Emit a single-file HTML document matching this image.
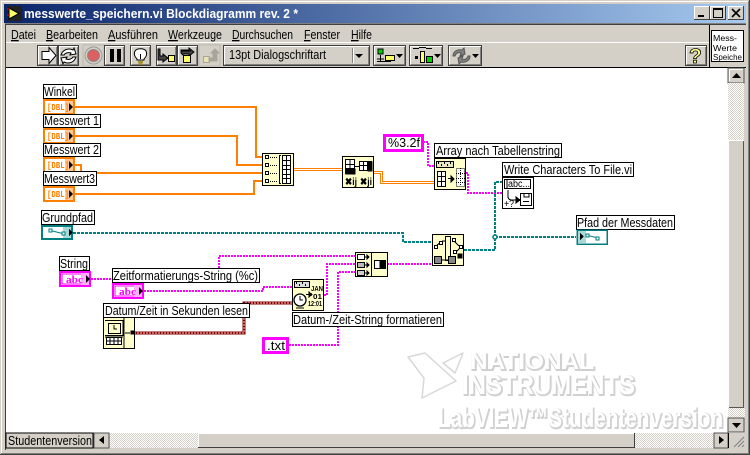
<!DOCTYPE html>
<html><head><meta charset="utf-8"><style>
html,body{margin:0;padding:0;background:#d4d0c8}
svg{display:block;position:absolute;left:0;top:0}
text{font-family:"Liberation Sans",sans-serif;font-size:13px;fill:#000}
.c{shape-rendering:crispEdges}
.l{fill:#fff;stroke:#000;stroke-width:1;shape-rendering:crispEdges}
.n{fill:#ffffcc;stroke:#000;stroke-width:1;shape-rendering:crispEdges}
.w{fill:none;shape-rendering:crispEdges}
.o{stroke:#ff8000;stroke-width:2}
.p{stroke:#ff00ff;stroke-width:2;stroke-dasharray:2 1}
.t{stroke:#008080;stroke-width:2;stroke-dasharray:3 1}
.dbl{font-size:9px;font-weight:bold;fill:#ff8000;font-family:"Liberation Mono",monospace}
.abc{font-size:10px;font-weight:bold;fill:#ff00ff;font-family:"Liberation Serif",serif}
.b{fill:#d4d0c8;stroke:#404040;shape-rendering:crispEdges}
.hl{fill:none;stroke:#fff;shape-rendering:crispEdges}
.sh{fill:none;stroke:#808080;shape-rendering:crispEdges}
.ws{fill:#d0d0d0;stroke:#d0d0d0;stroke-width:2;font-weight:bold}
.wm{fill:#fff;font-weight:bold}
.ic{fill:none;stroke:#000;stroke-width:1;shape-rendering:crispEdges}
</style></head><body>
<svg width="750" height="455" viewBox="0 0 750 455" xmlns="http://www.w3.org/2000/svg">
<defs>
<linearGradient id="tb" x1="0" x2="1" y1="0" y2="0"><stop offset="0" stop-color="#0a246a"/><stop offset="1" stop-color="#a6caf0"/></linearGradient>
<pattern id="chk" width="2" height="2" patternUnits="userSpaceOnUse"><rect width="2" height="2" fill="#fff"/><rect width="1" height="1" fill="#d4d0c8"/><rect x="1" y="1" width="1" height="1" fill="#d4d0c8"/></pattern>
</defs>

<!-- window frame -->
<rect width="750" height="455" fill="#d4d0c8"/>
<path class="c" d="M1 1.500H748M1.500 1V453" stroke="#fff"/>
<path class="c" d="M0 454.500H750M749.500 0V455" stroke="#404040"/>
<path class="c" d="M1 453.500H749M748.500 1V454" stroke="#808080"/>
<rect x="4" y="4" width="742" height="19" fill="url(#tb)"/>
<rect x="7" y="6" width="15" height="15" fill="#222"/>
<path d="M9 8l10 5.500-10 5.500z" fill="#ffff66" stroke="#000"/>
<path class="c" d="M7 9h3M7 15h3" stroke="#f00"/>
<text x="24" y="18" textLength="274" lengthAdjust="spacingAndGlyphs" style="font-weight:bold;font-size:13px;fill:#fff">messwerte_speichern.vi Blockdiagramm rev. 2 *</text>
<!-- title buttons -->
<g class="c">
<rect x="694" y="6" width="16" height="14" fill="#d4d0c8"/><path d="M694 6.500H710M694.500 6V20" stroke="#fff"/><path d="M694 19.500H710M709.500 6V20" stroke="#404040"/><rect x="698" y="15" width="6" height="2"/>
<rect x="710" y="6" width="16" height="14" fill="#d4d0c8"/><path d="M710 6.500H726M710.500 6V20" stroke="#fff"/><path d="M710 19.500H726M725.500 6V20" stroke="#404040"/><path d="M713.500 8.500h9v9h-9zM713 9.500h10" fill="none" stroke="#000"/>
<rect x="728" y="6" width="16" height="14" fill="#d4d0c8"/><path d="M728 6.500H744M728.500 6V20" stroke="#fff"/><path d="M728 19.500H744M743.500 6V20" stroke="#404040"/>
</g>
<path d="M732 9l8 8M740 9l-8 8" stroke="#000" stroke-width="1.600"/>
<!-- menu -->
<path class="c" d="M5 23.500H746" stroke="#808080"/><path class="c" d="M5 24.500H746" stroke="#404040"/>
<path class="c" d="M5 42.500H709" stroke="#fff"/><path class="c" d="M5 67.500H746" stroke="#000"/>
<path class="c" d="M709.500 25V67" stroke="#000"/>
<path class="c" d="M5.500 24V450" stroke="#404040"/>
<text x="11" y="39" textLength="25" lengthAdjust="spacingAndGlyphs"><tspan text-decoration="underline">D</tspan>atei</text>
<text x="46" y="39" textLength="52" lengthAdjust="spacingAndGlyphs"><tspan text-decoration="underline">B</tspan>earbeiten</text>
<text x="108" y="39" textLength="50" lengthAdjust="spacingAndGlyphs"><tspan text-decoration="underline">A</tspan>usführen</text>
<text x="168" y="39" textLength="54" lengthAdjust="spacingAndGlyphs"><tspan text-decoration="underline">W</tspan>erkzeuge</text>
<text x="232" y="39" textLength="61" lengthAdjust="spacingAndGlyphs"><tspan text-decoration="underline">D</tspan>urchsuchen</text>
<text x="304" y="39" textLength="36" lengthAdjust="spacingAndGlyphs"><tspan text-decoration="underline">F</tspan>enster</text>
<text x="351" y="39" textLength="21" lengthAdjust="spacingAndGlyphs"><tspan text-decoration="underline">H</tspan>ilfe</text>

<!-- toolbar buttons -->
<g>
<rect class="b" x="37.500" y="45.500" width="20" height="20"/><path class="hl" d="M38.500 64V46.500H57"/><path class="sh" d="M39 64.500H56.500V47"/>
<rect class="b" x="58.500" y="45.500" width="20" height="20"/><path class="hl" d="M59.500 64V46.500H78"/><path class="sh" d="M60 64.500H77.500V47"/>
<rect x="83" y="45" width="21" height="21" fill="#d4d0c8" stroke="#bbb8b0"/>
<rect class="b" x="104.500" y="45.500" width="20" height="20"/><path class="hl" d="M105.500 64V46.500H124"/><path class="sh" d="M106 64.500H123.500V47"/>
<rect class="b" x="130.500" y="45.500" width="20" height="20"/><path class="hl" d="M131.500 64V46.500H150"/><path class="sh" d="M132 64.500H149.500V47"/>
<rect class="b" x="156.500" y="45.500" width="20" height="20"/><path class="hl" d="M157.500 64V46.500H176"/><path class="sh" d="M158 64.500H175.500V47"/>
<rect class="b" x="177.500" y="45.500" width="20" height="20"/><path class="hl" d="M178.500 64V46.500H197"/><path class="sh" d="M179 64.500H196.500V47"/>
<rect x="199" y="45" width="21" height="21" fill="#d4d0c8" stroke="#bbb8b0"/>
<rect class="b" x="223.500" y="45.500" width="146" height="20"/><path class="hl" d="M224.500 64V46.500H369"/><path class="sh" d="M225 64.500H368.500V47"/>
<rect class="b" x="373.500" y="45.500" width="32" height="20"/><path class="hl" d="M374.500 64V46.500H405"/><path class="sh" d="M375 64.500H404.500V47"/>
<rect class="b" x="409.500" y="45.500" width="33" height="20"/><path class="hl" d="M410.500 64V46.500H442"/><path class="sh" d="M411 64.500H441.500V47"/>
<rect class="b" x="448.500" y="45.500" width="33" height="20"/><path class="hl" d="M449.500 64V46.500H481"/><path class="sh" d="M450 64.500H480.500V47"/>
<rect class="b" x="685.500" y="45.500" width="21" height="20"/><path class="hl" d="M686.500 64V46.500H706"/><path class="sh" d="M687 64.500H705.500V47"/>
</g>
<!-- run -->
<path d="M42 51.500h7v-4l7 8-7 8v-4h-7z" fill="#fff" stroke="#000"/>
<!-- run cont -->
<path d="M61 55c2-6 8-7 12-5l1-2 2 6-6 1 1-2c-3-1-6 0-7 2zM76 57c-2 6-8 7-12 5l-1 2-2-6 6-1-1 2c3 1 6 0 7-2z" fill="#fff" stroke="#000"/>
<!-- abort -->
<circle cx="93.500" cy="55.500" r="8.500" fill="none" stroke="#999"/><circle cx="93.500" cy="55.500" r="6" fill="#dd6060" stroke="#888"/>
<!-- pause -->
<rect class="c" x="110" y="49" width="4" height="13"/><rect class="c" x="117" y="49" width="4" height="13"/>
<!-- bulb -->
<path d="M137 59c-3-3-3-6-2-8 2-3 9-3 11 0 1 2 1 5-2 8v1h-7z" fill="#fff" stroke="#000"/>
<path d="M138 62h5M138.500 64h4" stroke="#a08000" stroke-width="1.500"/><path class="c" d="M140.500 54v5" stroke="#000"/>
<!-- step into -->
<path d="M160 49v7h3v-2l5 4-5 4v-2h-5v-11z" fill="#444" stroke="#000"/><rect class="c" x="168.500" y="55.500" width="6" height="6" fill="#ffff66" stroke="#000"/>
<!-- step over -->
<path d="M181 53v-3h8v-2l5 4-5 4v-2h-6v1z" fill="#444" stroke="#000"/><rect class="c" x="183.500" y="55.500" width="7" height="7" fill="#ffff66" stroke="#000"/><path class="c" d="M181 51h10" stroke="#000"/>
<!-- step out -->
<rect class="c" x="203.500" y="56.500" width="6" height="6" fill="#e8e4b8" stroke="#a8a49c"/><path d="M209 58h4v-5h-2l4-4 4 4h-2v8h-8z" fill="#a8a49c" stroke="#a8a49c"/>
<!-- font ring -->
<text x="229" y="59" textLength="97" lengthAdjust="spacingAndGlyphs">13pt Dialogschriftart</text>
<path class="c" d="M352.500 48v15" stroke="#808080"/><path class="c" d="M353.500 48v15" stroke="#fff"/><path d="M355 54h8l-4 4z" fill="#000"/>
<!-- align -->
<rect class="c" x="378" y="49" width="5" height="5" fill="#00d000" stroke="#000"/><path class="c" d="M380.500 55v7M377 59h7M377 61.500h14" stroke="#000"/><rect class="c" x="385.500" y="55.500" width="9" height="5" fill="#ffff66" stroke="#000"/>
<path d="M396 54h7l-3.500 4z" fill="#000"/>
<!-- distribute -->
<path class="c" d="M413 48.500h6M426 48.500h6M419 47.500h7" stroke="#000"/><rect class="c" x="420.500" y="51.500" width="4" height="11" fill="#ffff66" stroke="#000"/><rect class="c" x="426.500" y="56.500" width="6" height="6" fill="#00d000" stroke="#000"/><rect class="c" x="415" y="56" width="3" height="3"/>
<path d="M434 54h7l-3.500 4z" fill="#000"/>
<!-- reorder -->
<path d="M453 56c0-5 5-7 9-6l2-2 1 6-5 2 1-3c-3-1-5 0-6 3zM470 56c0 5-5 7-9 6l-2 2-1-6 5-2-1 3c3 1 5 0 6-3z" fill="#808080" stroke="#555"/>
<path d="M472 54h7l-3.500 4z" fill="#000"/>
<!-- help -->
<text x="689" y="63" style="font-size:21px;font-weight:bold;fill:#ffff88;stroke:#000;stroke-width:.8">?</text>
<!-- VI icon -->
<rect x="711.500" y="30.500" width="32" height="31" fill="#fff" stroke="#000" class="c"/>
<text x="713" y="41" style="font-size:8px" textLength="24" lengthAdjust="spacingAndGlyphs">Mess-</text>
<text x="713" y="51" style="font-size:8px" textLength="24" lengthAdjust="spacingAndGlyphs">Werte</text>
<text x="713" y="60" style="font-size:8px" textLength="29" lengthAdjust="spacingAndGlyphs" text-decoration="underline">Speiche</text>

<!-- canvas -->
<rect x="6" y="68" width="738" height="365" fill="#fff"/>

<!-- watermark -->
<g>
<path d="M408 357L425 353 L456 381 L438 390 L422 398 L424 378ZM443 363L463 353 L455 373Z" fill="#fff" stroke="#d8d8d8" stroke-width="1.500" stroke-linejoin="round"/>
<text class="ws" x="471" y="370" textLength="124" lengthAdjust="spacingAndGlyphs" style="font-size:22px">NATIONAL</text>
<text class="wm" x="470" y="369" textLength="124" lengthAdjust="spacingAndGlyphs" style="font-size:22px">NATIONAL</text>
<text class="ws" x="463" y="395" textLength="173" lengthAdjust="spacingAndGlyphs" style="font-size:27px">INSTRUMENTS</text>
<text class="wm" x="462" y="394" textLength="173" lengthAdjust="spacingAndGlyphs" style="font-size:27px">INSTRUMENTS</text>
<text class="ws" x="439" y="428" textLength="285" lengthAdjust="spacingAndGlyphs" style="font-size:27px">LabVIEW™Studentenversion</text>
<text class="wm" x="438" y="427" textLength="285" lengthAdjust="spacingAndGlyphs" style="font-size:27px">LabVIEW™Studentenversion</text>
</g>

<!-- scrollbars -->
<rect x="728" y="68" width="16" height="15" fill="#d4d0c8" stroke="#555" class="c"/><path class="hl" d="M729.500 81V69.500H743"/><path d="M732 78h9l-4.500-5z" fill="#000"/>
<rect x="728" y="83" width="16" height="57" fill="url(#chk)"/>
<rect x="728" y="140" width="17" height="268" fill="#d4d0c8"/><path class="hl" d="M728.500 408V140.500H744"/><path class="c" d="M743.500 141V408M729 407.500H744" stroke="#555"/>
<rect x="728" y="408" width="17" height="10" fill="url(#chk)"/>
<rect x="728" y="418" width="16" height="14" fill="#d4d0c8" stroke="#555" class="c"/><path d="M732 423h9l-4.500 5z" fill="#000"/>
<rect x="6" y="433" width="87" height="15" fill="#d4d0c8" stroke="#000" class="c"/>
<text x="8" y="445" textLength="84" lengthAdjust="spacingAndGlyphs">Studentenversion</text>
<rect x="94" y="433" width="15" height="15" fill="#d4d0c8" stroke="#555" class="c"/><path d="M104 436v8l-5-4z" fill="#000"/>
<rect x="110" y="433" width="88" height="15" fill="url(#chk)"/>
<rect x="198" y="433" width="437" height="15" fill="#d4d0c8"/><path class="hl" d="M198.500 447V433.500H635"/><path class="c" d="M198 447.500H635M634.500 433V448" stroke="#404040"/>
<rect x="635" y="433" width="79" height="15" fill="url(#chk)"/>
<rect x="714" y="433" width="14" height="15" fill="#d4d0c8" stroke="#555" class="c"/><path d="M719 436v8l5-4z" fill="#000"/>
<path class="c" d="M728.500 433V448" stroke="#000"/>
<path d="M734 447l10-10M738 447l6-6M742 447l2-2" stroke="#808080"/>

<!-- WIRES -->
<path class="w o" d="M75 107H256V157H262"/>
<path class="w o" d="M75 136H237V165H262"/>
<path class="w o" d="M75 165H81V173H262"/>
<path class="w o" d="M75 194H254V181H262"/>
<path class="w" stroke="#ff8000" d="M293 168.500H342M293 170.500H342"/>
<path class="w" stroke="#ff8000" d="M374 171.500H382.500V181.500H434M374 173.500H380.500V183.500H434"/>
<path class="w p" d="M423 142H428V166H434"/>
<path class="w p" d="M466 173H468V193H502"/>
<path class="w t" d="M464 250H495V182H502"/>
<path class="w t" d="M495 237H576"/>
<circle cx="495" cy="237" r="2" fill="#fff" stroke="#008080" stroke-width="1.500"/>
<path class="w t" d="M73 233H403V242H432"/>
<path class="w p" d="M91 279H113"/>
<path class="w p" d="M219 268V256H355"/>
<path class="w p" d="M144 291H263V287H292"/>
<path class="w p" d="M324 295H327V264H355"/>
<path class="w p" d="M289 345H338V272H355"/>
<path class="w p" d="M387 264H432"/>
<path class="w" stroke="#800000" stroke-width="3" d="M134 333H244V303H292"/><path class="w" stroke="#ffd0d0" stroke-dasharray="2 1" d="M134 333H244V303H292"/>

<!-- DBL terminals -->
<g transform="translate(43,99)"><rect x="1" y="1" width="30" height="14" fill="#fff" stroke="#ff8000" stroke-width="2"/><rect x="22" y="2" width="8" height="12" fill="#ffc896"/><text class="dbl" x="4" y="11" textLength="22" lengthAdjust="spacingAndGlyphs">[DBL]</text><path d="M26 4v8l4-4z"/></g>
<g transform="translate(43,128)"><rect x="1" y="1" width="30" height="14" fill="#fff" stroke="#ff8000" stroke-width="2"/><rect x="22" y="2" width="8" height="12" fill="#ffc896"/><text class="dbl" x="4" y="11" textLength="22" lengthAdjust="spacingAndGlyphs">[DBL]</text><path d="M26 4v8l4-4z"/></g>
<g transform="translate(43,157)"><rect x="1" y="1" width="30" height="14" fill="#fff" stroke="#ff8000" stroke-width="2"/><rect x="22" y="2" width="8" height="12" fill="#ffc896"/><text class="dbl" x="4" y="11" textLength="22" lengthAdjust="spacingAndGlyphs">[DBL]</text><path d="M26 4v8l4-4z"/></g>
<g transform="translate(43,186)"><rect x="1" y="1" width="30" height="14" fill="#fff" stroke="#ff8000" stroke-width="2"/><rect x="22" y="2" width="8" height="12" fill="#ffc896"/><text class="dbl" x="4" y="11" textLength="22" lengthAdjust="spacingAndGlyphs">[DBL]</text><path d="M26 4v8l4-4z"/></g>

<!-- labels -->
<rect class="l" x="43.500" y="84.500" width="33" height="14"/><text x="44" y="96" textLength="31" lengthAdjust="spacingAndGlyphs">Winkel</text>
<rect class="l" x="43.500" y="114.500" width="57" height="13"/><text x="44" y="125" textLength="55" lengthAdjust="spacingAndGlyphs">Messwert 1</text>
<rect class="l" x="43.500" y="143.500" width="57" height="13"/><text x="44" y="154" textLength="55" lengthAdjust="spacingAndGlyphs">Messwert 2</text>
<rect class="l" x="43.500" y="171.500" width="53" height="14"/><text x="44" y="183" textLength="51" lengthAdjust="spacingAndGlyphs">Messwert3</text>
<rect class="l" x="41.500" y="210.500" width="53" height="14"/><text x="42" y="222" textLength="51" lengthAdjust="spacingAndGlyphs">Grundpfad</text>
<rect class="l" x="59.500" y="256.500" width="30" height="14"/><text x="60" y="268" textLength="28" lengthAdjust="spacingAndGlyphs">String</text>
<rect class="l" x="112.500" y="268.500" width="147" height="14"/><text x="113" y="280" textLength="145" lengthAdjust="spacingAndGlyphs">Zeitformatierungs-String (%c)</text>
<rect class="l" x="103.500" y="303.500" width="146" height="14"/><text x="105" y="315" textLength="143" lengthAdjust="spacingAndGlyphs">Datum/Zeit in Sekunden lesen</text>
<rect class="l" x="292.500" y="312.500" width="151" height="14"/><text x="293" y="324" textLength="149" lengthAdjust="spacingAndGlyphs">Datum-/Zeit-String formatieren</text>
<rect class="l" x="434.500" y="143.500" width="127" height="14"/><text x="436" y="155" textLength="124" lengthAdjust="spacingAndGlyphs">Array nach Tabellenstring</text>
<rect class="l" x="502.500" y="162.500" width="131" height="14"/><text x="504" y="174" textLength="128" lengthAdjust="spacingAndGlyphs">Write Characters To File.vi</text>
<rect class="l" x="576.500" y="215.500" width="98" height="14"/><text x="577" y="227" textLength="96" lengthAdjust="spacingAndGlyphs">Pfad der Messdaten</text>

<!-- path terminals -->
<g class="c"><rect x="42" y="226" width="30" height="13" fill="#fff" stroke="#008080" stroke-width="2"/><rect x="63" y="227" width="8" height="11" fill="#a8d8d8"/><path d="M69 229v7l4-3.500z" fill="#000"/></g>
<path d="M50.500 230.500l12 3" stroke="#008080" fill="none"/><rect x="49" y="229" width="3" height="3" fill="#fff" stroke="#008080"/><rect x="62" y="232" width="3" height="3" fill="#fff" stroke="#008080"/>
<g class="c"><rect x="577" y="230" width="30" height="14" fill="#fff" stroke="#008080" stroke-width="1.500"/><rect x="578" y="231" width="8" height="12" fill="#a8d8d8"/><path d="M580 233v7l4-3.500z" fill="#000"/></g>
<path d="M586 235l12 3" stroke="#008080" fill="none"/><rect x="586" y="234" width="3" height="3" fill="#fff" stroke="#008080"/><rect x="596" y="237" width="3" height="3" fill="#fff" stroke="#008080"/>

<!-- string terminals -->
<g><rect x="60" y="272" width="30" height="14" fill="#fff" stroke="#ff00ff" stroke-width="2"/><rect x="62" y="274" width="26" height="10" fill="#fff" stroke="#ff00ff"/><rect x="81" y="273" width="8" height="12" fill="#ffb0ff"/><text class="abc" x="66" y="283" textLength="17" lengthAdjust="spacingAndGlyphs">abc</text><path d="M86 275v8l4-4z"/></g>
<g><rect x="113" y="284" width="30" height="14" fill="#fff" stroke="#ff00ff" stroke-width="2"/><rect x="115" y="286" width="26" height="10" fill="#fff" stroke="#ff00ff"/><rect x="134" y="285" width="8" height="12" fill="#ffb0ff"/><text class="abc" x="119" y="295" textLength="17" lengthAdjust="spacingAndGlyphs">abc</text><path d="M139 287v8l4-4z"/></g>

<!-- constants -->
<rect x="384.500" y="135.500" width="38" height="15" fill="#fff" stroke="#ff00ff" stroke-width="3" class="c"/><text x="388" y="147" textLength="32" lengthAdjust="spacingAndGlyphs">%3.2f</text>
<rect x="263.500" y="338.500" width="24" height="14" fill="#fff" stroke="#ff00ff" stroke-width="3" class="c"/><text x="267" y="350" textLength="18" lengthAdjust="spacingAndGlyphs">.txt</text>

<!-- Build array node -->
<rect class="n" x="262.500" y="153.500" width="31" height="32"/>
<g class="ic">
<rect x="265.500" y="155.500" width="3" height="3" fill="#fff"/><rect x="265.500" y="163.500" width="3" height="3" fill="#fff"/><rect x="265.500" y="171.500" width="3" height="3" fill="#fff"/><rect x="265.500" y="179.500" width="3" height="3" fill="#fff"/>
<path d="M270 157.500h7M270 165.500h7M270 173.500h7M270 181.500h7" stroke-dasharray="1 1"/>
<path d="M281 155.500h-1.500v28h1.500"/>
<rect x="282.500" y="155.500" width="8" height="28" fill="#fff"/>
<path d="M286.500 155v28M282 160.500h9M282 165.500h9M282 169.500h9M282 174.500h9M282 178.500h9"/>
</g>
<!-- Transpose node -->
<rect class="n" x="342.500" y="156.500" width="31" height="31"/>
<g class="ic">
<rect x="345.500" y="159.500" width="9" height="14" fill="#fff"/><path d="M350 159v15M345 164.500h10M345 168.500h10"/><rect x="350" y="169" width="5" height="5" fill="#000"/><rect x="346" y="169" width="4" height="5" fill="#000"/>
<path d="M355 166.500h4"/>
<rect x="359.500" y="161.500" width="12" height="9" fill="#fff"/><path d="M363.500 161v10M367.500 161v10M359 165.500h13"/><rect x="368" y="162" width="4" height="9" fill="#000"/>
</g>
<text x="345" y="185" style="font-size:10px;font-weight:bold" textLength="12" lengthAdjust="spacingAndGlyphs">✖ij</text><text x="360" y="185" style="font-size:10px;font-weight:bold" textLength="12" lengthAdjust="spacingAndGlyphs">✖ji</text>
<!-- Array to spreadsheet -->
<rect class="n" x="434.500" y="158.500" width="31" height="31"/>
<g class="ic">
<rect x="436.500" y="161.500" width="17" height="6" fill="#e8e8c0"/><path d="M438 163h1M441 165h1M444 163h1M447 165h1M450 163h1" stroke-width="2"/>
<rect x="437.500" y="171.500" width="8" height="15" fill="#fff"/><path d="M441.500 171v16M437 176.500h9M437 181.500h9"/>
<path d="M448 178.500h4"/><path d="M451 176v6l3-3z" fill="#000"/>
<rect x="456.500" y="168.500" width="8" height="18" fill="#fff" stroke-dasharray="1 1"/><path d="M460.500 168v18M456 173.500h9M456 178.500h9M456 182.500h9" stroke-dasharray="1 1"/>
</g>
<!-- Write chars -->
<rect x="502.500" y="177.500" width="31" height="31" fill="#fff" stroke="#000" class="c"/>
<g class="ic"><rect x="504.500" y="179.500" width="26" height="9" fill="#fff"/><path d="M507 179v10"/><path d="M508 190v6q0 4 4 4h7"/><path d="M516 197v6l4-3z" fill="#000"/><rect x="520.500" y="193.500" width="11" height="12" fill="#fff"/><path d="M524 194v3h5v-3M523 201.500h6"/></g>
<text x="508" y="187" style="font-size:10px" textLength="22" lengthAdjust="spacingAndGlyphs">abc...</text>
<text x="504" y="207" style="font-size:10px" textLength="10" lengthAdjust="spacingAndGlyphs">+?</text>
<!-- Build path -->
<rect class="n" x="432.500" y="234.500" width="31" height="31"/>
<g class="ic">
<rect x="445.500" y="236.500" width="5" height="24" fill="#ffffcc"/>
<rect x="434.500" y="245.500" width="3" height="3" fill="#fff"/><rect x="439.500" y="241.500" width="3" height="3" fill="#fff"/><path d="M437 245l3-2M442 241h3"/>
<path d="M454 241l5 5M454 254l5-5"/><rect x="452.500" y="238.500" width="3" height="3" fill="#fff"/><rect x="459.500" y="245.500" width="3" height="3" fill="#fff"/><rect x="458" y="254" width="4" height="4" fill="#000"/><rect x="453.500" y="250.500" width="3" height="3" fill="#fff"/>
<rect x="434.500" y="256.500" width="7" height="7" fill="#888"/><rect x="448.500" y="256.500" width="7" height="7" fill="#888"/><path d="M441 260h7"/>
</g>
<!-- Get date time -->
<rect class="n" x="103.500" y="317.500" width="31" height="31"/>
<g class="ic">
<path d="M105 320.500h18v15h-18M105 337h18"/>
<rect x="108.500" y="323.500" width="12" height="10" fill="#ffffcc"/><path d="M114 325v4h3"/>
<rect x="106.500" y="337.500" width="15" height="7" fill="#fff"/><path d="M110 337v8M114 337v8M118 337v8M106 341h15"/><path d="M124 318v30"/>
<path d="M125 333h5" /><rect x="131" y="331" width="3" height="3" fill="#000"/></g>
<!-- Format date/time -->
<rect class="n" x="292.500" y="279.500" width="31" height="31"/>
<g class="ic"><rect x="294.500" y="281.500" width="15" height="6" fill="#ddd"/><path d="M296 283h1M299 285h1M302 283h1M305 285h1" stroke-width="2"/>
<circle cx="300" cy="300" r="6" fill="#fff" stroke-width="1.300" style="shape-rendering:auto"/><path d="M300 296v4h3M296 308h8"/><path d="M306 294.500h4"/><path d="M309 292v5l3-2.500z" fill="#000"/></g>
<text x="311" y="291" style="font-size:7px;font-weight:bold" textLength="12" lengthAdjust="spacingAndGlyphs">JAN</text>
<text x="313" y="299" style="font-size:7px;font-weight:bold" textLength="9" lengthAdjust="spacingAndGlyphs">01</text>
<text x="308" y="306" style="font-size:7px;font-weight:bold" textLength="14" lengthAdjust="spacingAndGlyphs">12:01</text>
<!-- Concat -->
<rect class="n" x="355.500" y="252.500" width="32" height="24"/>
<g class="ic"><path d="M371.500 252v25"/>
<rect x="357.500" y="254.500" width="7" height="5" fill="#fff"/><rect x="357.500" y="262.500" width="7" height="5" fill="#bbb"/><rect x="357.500" y="270.500" width="7" height="5" fill="#ccc"/>
<path d="M365 257h2M365 265h2M365 273h2"/><path d="M367 255v4l2-2zM367 263v4l2-2zM367 271v4l2-2z" fill="#000"/>
<rect x="374.500" y="260.500" width="11" height="8" fill="#fff"/><rect x="380" y="261" width="5" height="7" fill="#000"/></g>
</svg>
</body></html>
